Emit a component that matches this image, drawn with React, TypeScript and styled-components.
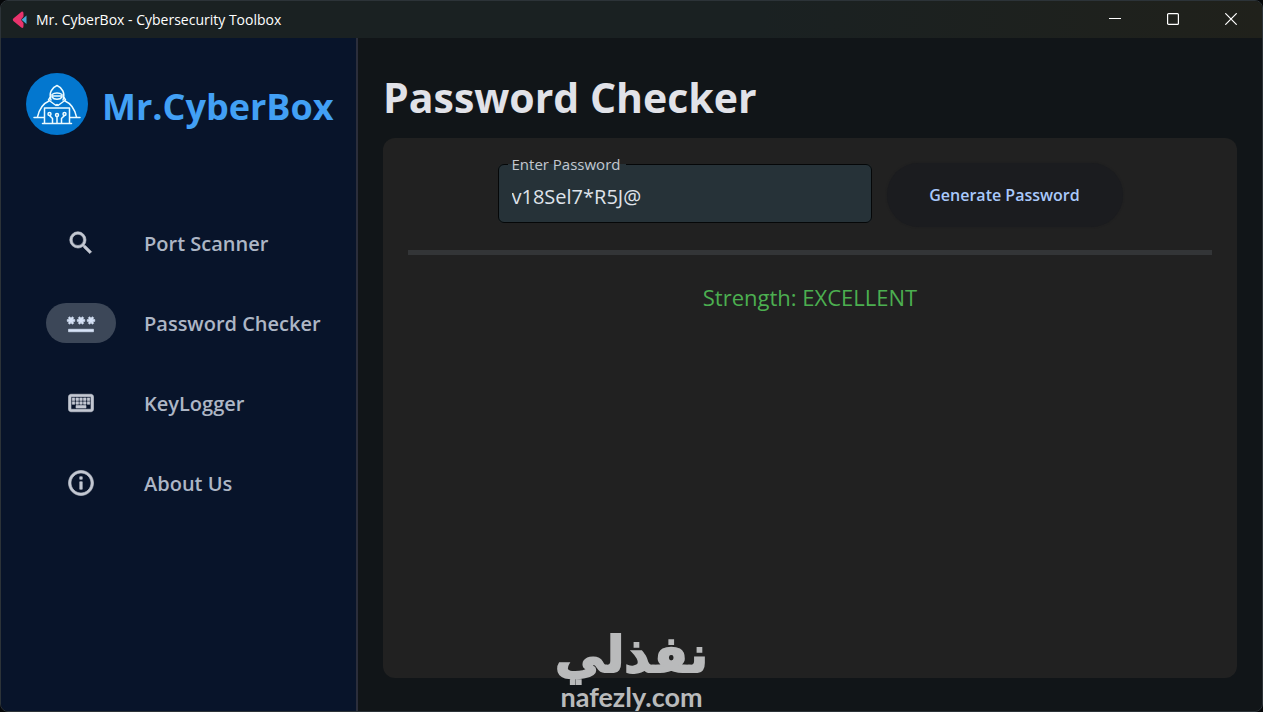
import React, { useState } from 'react';
import styled, { createGlobalStyle } from 'styled-components';
import { MdSearch, MdPassword, MdOutlineKeyboard, MdInfoOutline } from 'react-icons/md';

const GlobalStyle = createGlobalStyle`
  * { box-sizing: border-box; }
  body {
    margin: 0;
    background: #050709;
    color: #e1e2e8;
    font-family: "Open Sans", "Noto Sans", sans-serif;
  }
  button, input { font-family: inherit; }
`;

const Window = styled.div`
  position: relative;
  display: flex;
  flex-direction: column;
  min-height: 100vh;
  overflow: hidden;
  border: 1px solid #2c3338;
  border-radius: 8px;
  background: #111518;
`;

const TitleBar = styled.header`
  display: flex;
  align-items: center;
  height: 37px;
  padding: 0 2px 0 11px;
  background: linear-gradient(90deg, #1a2122 0%, #1a2122 60%, #20211b 100%);
`;

const WindowTitle = styled.span`
  flex: 1;
  margin-left: 8px;
  font-size: 14px;
  line-height: 20px;
  color: #ffffff;
`;

const WindowButton = styled.button`
  display: flex;
  align-items: center;
  justify-content: center;
  width: 58px;
  height: 36px;
  padding: 0 0 2px;
  border: 0;
  background: transparent;
  color: #ffffff;
`;

const Body = styled.div`
  display: flex;
  flex: 1;
`;

const Sidebar = styled.aside`
  flex: none;
  width: 357px;
  padding: 35px 20px 0 25px;
  border-right: 2px solid #2b2e3b;
  background: #08142a;
`;

const Brand = styled.div`
  display: flex;
  align-items: center;
  gap: 14px;

  svg { flex: none; }
`;

const BrandName = styled.span`
  font-size: 36px;
  line-height: 48px;
  padding-top: 6px;
  font-weight: 700;
  color: #42a0f5;
`;

const Nav = styled.nav`
  display: flex;
  flex-direction: column;
  gap: 40px;
  margin-top: 88px;
  padding-left: 20px;
`;

const NavItem = styled.button`
  display: flex;
  align-items: center;
  gap: 28px;
  height: 40px;
  padding: 0;
  border: 0;
  background: transparent;
  text-align: left;
`;

const Indicator = styled.span<{ $active: boolean }>`
  display: flex;
  align-items: center;
  justify-content: center;
  width: 70px;
  height: 40px;
  border-radius: 20px;
  font-size: 30px;
  color: ${(p) => (p.$active ? '#d7e3f7' : '#c3c8d2')};
  background: ${(p) => (p.$active ? '#3c4758' : 'transparent')};

  path:not([fill='none']) {
    stroke: currentColor;
    stroke-width: 0.5;
  }
`;

const NavLabel = styled.span`
  padding-top: 2px;
  font-size: 20px;
  line-height: 28px;
  font-weight: 600;
  white-space: nowrap;
  color: #adb6c5;
`;

const Main = styled.main`
  display: flex;
  flex: 1;
  flex-direction: column;
  min-width: 0;
  padding: 27px 25px 33px;
`;

const PageTitle = styled.h1`
  margin: 0 0 9px;
  font-size: 41px;
  line-height: 64px;
  font-weight: 700;
  color: #e1e2e8;
`;

const Panel = styled.section`
  flex: 1;
  padding: 16px 25px 25px;
  border-radius: 12px;
  background: #212121;
`;

const Controls = styled.div`
  display: flex;
  align-items: flex-start;
  justify-content: center;
  gap: 15px;
`;

const Field = styled.fieldset`
  width: 374px;
  height: 69px;
  margin: 0;
  padding: 0 13px;
  border: 1px solid #050708;
  border-radius: 6px;
  background: #263238;
`;

const Legend = styled.legend`
  margin-left: -4px;
  padding: 0 6px 0 4px;
  font-size: 15px;
  line-height: 20px;
  color: #c3c7cf;
`;

const PasswordInput = styled.input`
  display: block;
  width: 100%;
  height: 44px;
  padding: 0;
  border: 0;
  outline: 0;
  background: transparent;
  font-size: 20px;
  color: #dfe3ea;
`;

const GenerateButton = styled.button`
  width: 236px;
  height: 64px;
  margin-top: 9px;
  padding: 0;
  border: 0;
  border-radius: 32px;
  background: #1b1c1f;
  box-shadow: 0 0 2px #1b1c1f;
  font-size: 16px;
  font-weight: 600;
  color: #a9c9fb;
`;

const Divider = styled.hr`
  height: 5px;
  margin: 23px 0 0;
  border: 0;
  background: #333537;
`;

const Strength = styled.p`
  margin: 26px 0 0;
  font-size: 22px;
  line-height: 32px;
  text-align: center;
  color: #4caf50;
`;

const Watermark = styled.div`
  position: absolute;
  left: 50%;
  bottom: 0;
  display: flex;
  flex-direction: column;
  align-items: center;
  transform: translateX(-50%);
  pointer-events: none;
  color: #b9babb;
`;

const WatermarkArabic = styled.span`
  font-family: "DejaVu Sans", sans-serif;
  font-size: 50px;
  line-height: 56px;
  font-weight: 700;
  -webkit-text-stroke: 2px currentColor;
`;

const WatermarkLatin = styled.span`
  font-family: Lato, sans-serif;
  font-size: 27px;
  line-height: 28px;
  font-weight: 700;
`;

const FletMark = () => (
  <svg width="16" height="18" viewBox="0 0 16 18" aria-hidden="true">
    <path d="M9.5 .8 1.3 7.6Q.2 8.8 1.3 10l8 6.6Q11.5 17.8 11.5 15V12L9 8.8l2.500-3.200V2.500Q11.500 0 9.500 .8Z" fill="#e8336c" />
    <path d="M14.500 4.500 9.500 8.800l5 4.200Z" fill="#47a9d4" />
  </svg>
);

const HackerMark = () => (
  <svg width="62" height="62" viewBox="0 0 62 62" aria-hidden="true">
    <circle cx="31" cy="31" r="31" fill="#0377cf" />
    <g fill="none" stroke="#ecfbff" strokeWidth="1.500" strokeLinecap="round" strokeLinejoin="round">
      <path d="M25 27C22.500 20 26 14.500 31 12.500c5 2 8.500 7.500 6 14.500" />
      <path d="M26 21.500c2.500-2 7.500-2 10 0v2.500c-2 3-8 3-10 0Z" />
      <path d="M26.500 23h9" />
      <path d="M24 24.500l-1.500 2.500 7.500 5.500 1-1 1 1 7.500-5.500-1.500-2.500" />
      <path d="M23 28C17 30.500 13.500 35 11.500 44" />
      <path d="M39 28c6 2.500 9.500 7 11.500 16" />
      <path d="M8 44.500h10M44 44.500h10" />
      <path d="M18.500 50V35h25v15" />
      <path d="M16.500 50.500h29" />
      <circle cx="23.500" cy="41" r="1.500" />
      <circle cx="31" cy="42" r="1.500" />
      <circle cx="38.500" cy="41" r="1.500" />
      <path d="M23.500 42.500 26.500 45.500V50M31 43.500V50M38.500 42.500 35.500 45.500V50" />
    </g>
  </svg>
);

const navItems = [
  { label: 'Port Scanner', Icon: MdSearch },
  { label: 'Password Checker', Icon: MdPassword },
  { label: 'KeyLogger', Icon: MdOutlineKeyboard },
  { label: 'About Us', Icon: MdInfoOutline },
];

export default function App() {
  const [password, setPassword] = useState('v18Sel7*R5J@');
  return (
    <>
      <GlobalStyle />
      <Window>
        <TitleBar>
          <FletMark />
          <WindowTitle>Mr. CyberBox - Cybersecurity Toolbox</WindowTitle>
          <WindowButton aria-label="Minimize">
            <svg width="12" height="12" viewBox="0 0 12 12"><path d="M0 5.500h12" stroke="currentColor" /></svg>
          </WindowButton>
          <WindowButton aria-label="Maximize">
            <svg width="12" height="12" viewBox="0 0 12 12"><rect x=".6" y=".6" width="10.800" height="10.800" rx="1" fill="none" stroke="currentColor" strokeWidth="1.200" /></svg>
          </WindowButton>
          <WindowButton aria-label="Close">
            <svg width="12" height="12" viewBox="0 0 12 12"><path d="M.3 .3l11.400 11.400M11.700 .3.3 11.700" stroke="currentColor" strokeWidth="1.200" /></svg>
          </WindowButton>
        </TitleBar>
        <Body>
          <Sidebar>
            <Brand>
              <HackerMark />
              <BrandName>Mr.CyberBox</BrandName>
            </Brand>
            <Nav>
              {navItems.map(({ label, Icon }) => (
                <NavItem key={label} aria-current={label === 'Password Checker' ? 'page' : undefined}>
                  <Indicator $active={label === 'Password Checker'}><Icon /></Indicator>
                  <NavLabel>{label}</NavLabel>
                </NavItem>
              ))}
            </Nav>
          </Sidebar>
          <Main>
            <PageTitle>Password Checker</PageTitle>
            <Panel>
              <Controls>
                <Field>
                  <Legend><label htmlFor="password">Enter Password</label></Legend>
                  <PasswordInput id="password" type="text" value={password} onChange={(e) => setPassword(e.target.value)} />
                </Field>
                <GenerateButton>Generate Password</GenerateButton>
              </Controls>
              <Divider />
              <Strength>Strength: EXCELLENT</Strength>
            </Panel>
          </Main>
        </Body>
        <Watermark>
          <WatermarkArabic lang="ar" dir="rtl">نفذلي</WatermarkArabic>
          <WatermarkLatin>nafezly.com</WatermarkLatin>
        </Watermark>
      </Window>
    </>
  );
}
